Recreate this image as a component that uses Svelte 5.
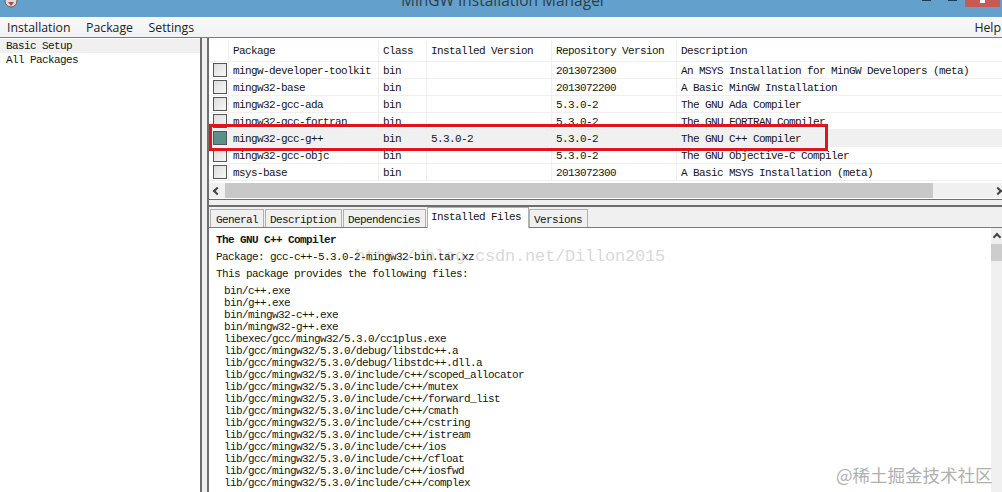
<script>
  const rows = [
    { name: 'mingw-developer-toolkit', inst: '', repo: '2013072300', desc: 'An MSYS Installation for MinGW Developers (meta)' },
    { name: 'mingw32-base', inst: '', repo: '2013072200', desc: 'A Basic MinGW Installation' },
    { name: 'mingw32-gcc-ada', inst: '', repo: '5.3.0-2', desc: 'The GNU Ada Compiler' },
    { name: 'mingw32-gcc-fortran', inst: '', repo: '5.3.0-2', desc: 'The GNU FORTRAN Compiler' },
    { name: 'mingw32-gcc-g++', inst: '5.3.0-2', repo: '5.3.0-2', desc: 'The GNU C++ Compiler', on: true },
    { name: 'mingw32-gcc-objc', inst: '', repo: '5.3.0-2', desc: 'The GNU Objective-C Compiler' },
    { name: 'msys-base', inst: '', repo: '2013072300', desc: 'A Basic MSYS Installation (meta)' }
  ];
  const tabs = ['General', 'Description', 'Dependencies', 'Installed Files', 'Versions'];
  const inc = 'lib/gcc/mingw32/5.3.0/include/c++/';
  const files = [
    'bin/c++.exe', 'bin/g++.exe', 'bin/mingw32-c++.exe', 'bin/mingw32-g++.exe',
    'libexec/gcc/mingw32/5.3.0/cc1plus.exe',
    'lib/gcc/mingw32/5.3.0/debug/libstdc++.a', 'lib/gcc/mingw32/5.3.0/debug/libstdc++.dll.a',
    inc + 'scoped_allocator', inc + 'mutex', inc + 'forward_list', inc + 'cmath', inc + 'cstring',
    inc + 'istream', inc + 'ios', inc + 'cfloat', inc + 'iosfwd', inc + 'complex'
  ];
</script>

<div class="window">
  <header class="titlebar">
    <svg class="logo" width="16" height="16" viewBox="0 0 16 16" aria-hidden="true">
      <circle cx="8" cy="6" r="6" fill="#dedad8" stroke="#6b5a58" />
      <path d="M5 7l3 4 3-4z" fill="#b8434a" />
    </svg>
    <span class="title">MinGW Installation Manager</span>
    <div class="controls">
      <span class="ctl"></span>
      <span class="ctl"></span>
      <span class="close"><i></i></span>
    </div>
  </header>

  <nav class="menubar">
    <span>Installation</span>
    <span>Package</span>
    <span>Settings</span>
    <span class="help">Help</span>
  </nav>

  <div class="body">
    <aside class="sidebar">
      <div class="cat active">Basic Setup</div>
      <div class="cat">All Packages</div>
    </aside>

    <main class="content">
      <section class="list">
        <div class="row head">
          <span class="c-check"></span>
          <span class="c-name">Package</span>
          <span class="c-class">Class</span>
          <span class="c-inst">Installed Version</span>
          <span class="c-repo">Repository Version</span>
          <span class="c-desc">Description</span>
        </div>
        {#each rows as r}
          <div class="row" class:sel={r.on}>
            <span class="c-check"><span class="box" class:on={r.on}></span></span>
            <span class="c-name">{r.name}</span>
            <span class="c-class">bin</span>
            <span class="c-inst">{r.inst}</span>
            <span class="c-repo">{r.repo}</span>
            <span class="c-desc">{r.desc}</span>
          </div>
        {/each}
        <div class="hscroll">
          <span class="arrow left"></span>
          <span class="thumb"></span>
          <span class="arrow right"></span>
        </div>
        <span class="highlight"></span>
      </section>

      <section class="details">
        <div class="tabs">
          {#each tabs as t}
            <span class="tab" class:current={t === 'Installed Files'}>{t}</span>
          {/each}
        </div>
        <div class="pane">
          <div class="text">
            <h1>The GNU C++ Compiler</h1>
            <p>Package: gcc-c++-5.3.0-2-mingw32-bin.tar.xz</p>
            <p>This package provides the following files:</p>
            <ul>
              {#each files as f}<li>{f}</li>{/each}
            </ul>
          </div>
          <div class="vscroll">
            <span class="arrow up"></span>
            <span class="vthumb"></span>
          </div>
        </div>
      </section>
    </main>
  </div>

  <span class="mark-a">http://blog.csdn.net/Dillon2015</span>
  <span class="mark-b">@稀土掘金技术社区</span>
</div>

<style>
  :global(body) {
    margin: 0;
    background: #fff;
  }

  .window {
    position: relative;
    width: 1002px;
    height: 492px;
    overflow: hidden;
    display: flex;
    flex-direction: column;
    font-family: "Liberation Mono", monospace;
    font-size: 11px;
    letter-spacing: -0.6px;
    color: #151515;
  }

  .titlebar {
    position: relative;
    flex: 0 0 17px;
    background: #63a1cc;
    overflow: hidden;
    letter-spacing: 0;
  }

  .logo {
    position: absolute;
    left: 3px;
    top: -5px;
  }

  .title {
    position: absolute;
    left: 401px;
    top: -11px;
    font: 15.5px/22px "Open Sans", sans-serif;
    color: #2b3d4a;
    white-space: nowrap;
  }

  .controls {
    position: absolute;
    right: 2px;
    top: 0;
    display: flex;
    align-items: flex-start;
  }

  .ctl {
    width: 9px;
    height: 1px;
    margin: 0 8px 0 9px;
    background: #1d3c57;
  }

  .close {
    position: relative;
    width: 35px;
    height: 7px;
    background: #c75a57;
  }

  .close i {
    position: absolute;
    left: 15px;
    top: 0;
    width: 5px;
    height: 3px;
    background: #fff;
  }

  .menubar {
    flex: 0 0 21px;
    display: flex;
    align-items: center;
    gap: 15.5px;
    padding: 0 1px 0 7px;
    background: linear-gradient(#f7f9fb, #f1f2f3);
    border-bottom: 1px solid #7c7c7c;
    font: 12.3px "Open Sans", sans-serif;
    letter-spacing: 0;
    color: #222;
    box-sizing: border-box;
  }

  .help {
    margin-left: auto;
  }

  .body {
    flex: 1;
    display: flex;
    min-height: 0;
    background: #f0f0f0;
  }

  .sidebar {
    box-sizing: border-box;
    width: 202px;
    flex: none;
    background: #fff;
    border-right: 2px solid #6e6e6e;
    padding-top: 1px;
  }

  .cat {
    height: 14px;
    line-height: 14px;
    padding-left: 6px;
  }

  .cat.active {
    background: #f0f0f0;
  }

  .content {
    flex: 1;
    margin-left: 5px;
    min-width: 0;
    display: flex;
    flex-direction: column;
    border-left: 2px solid #6e6e6e;
  }

  .list {
    position: relative;
    box-sizing: border-box;
    height: 162px;
    background: #fff;
    border-bottom: 1px solid #6e6e6e;
    padding-top: 2px;
  }

  .row {
    display: flex;
    height: 17px;
    line-height: 18px;
    box-sizing: border-box;
    border-bottom: 1px solid #efefef;
    white-space: nowrap;
  }

  .row.head {
    height: 22px;
    line-height: 22px;
  }

  .row.sel {
    background: #f0f0f0;
  }

  .row > span {
    box-sizing: border-box;
    border-right: 1px solid #efefef;
    padding-left: 4px;
    overflow: hidden;
  }

  .c-check {
    width: 20px;
    display: flex;
    align-items: center;
    padding-left: 4px !important;
  }

  .c-name { width: 150px; }
  .c-class { width: 48px; }
  .c-inst { width: 125px; }
  .c-repo { width: 125px; }
  .c-desc { flex: 1; border-right: 0 !important; }

  .box {
    box-sizing: border-box;
    width: 14px;
    height: 14px;
    border: 1px solid #555;
    background: linear-gradient(135deg, #dcdcdc, #f8f8f8);
  }

  .box.on {
    background: #5b9089;
  }

  .hscroll {
    display: flex;
    align-items: center;
    height: 15px;
    margin-top: 2px;
    background: #f0f0f0;
  }

  .thumb {
    flex: 0 0 708px;
    height: 15px;
    margin-left: 5px;
    background: #c8c8c8;
  }

  .arrow {
    flex: none;
    width: 6px;
    height: 6px;
    box-sizing: border-box;
    border: solid #444;
    border-width: 2px 0 0 2px;
  }

  .arrow.left {
    margin-left: 5px;
    transform: rotate(-45deg);
  }

  .arrow.right {
    margin-left: auto;
    margin-right: 1px;
    transform: rotate(135deg);
  }

  .arrow.up {
    margin: 6px auto 0;
    transform: rotate(45deg);
  }

  .highlight {
    position: absolute;
    left: 0;
    top: 86px;
    width: 619px;
    height: 27px;
    box-sizing: border-box;
    border: 3px solid #e0141c;
  }

  .details {
    flex: 1;
    min-height: 0;
    display: flex;
    flex-direction: column;
    margin-top: 5px;
    border-top: 2px solid #6e6e6e;
  }

  .tabs {
    flex: 0 0 21px;
    display: flex;
    align-items: flex-end;
    padding-left: 1px;
    border-bottom: 1px solid #7a7a7a;
    box-sizing: border-box;
  }

  .tab {
    box-sizing: border-box;
    height: 18px;
    line-height: 20px;
    padding: 0 5px 0 4px;
    margin-right: 1px;
    background: #f0f0f0;
    border: 1px solid #b0b0b0;
    border-bottom: 0;
  }

  .tab:first-child {
    padding-left: 5px;
  }

  .tab.current {
    height: 21px;
    line-height: 19px;
    padding: 0 7px 0 3px;
    margin-bottom: -1px;
    margin-right: 0;
    background: #fff;
  }

  .pane {
    flex: 1;
    min-height: 0;
    display: flex;
    background: #fff;
  }

  .text {
    flex: 1;
    padding: 5px 0 0 7px;
    white-space: nowrap;
  }

  h1 {
    margin: 0;
    font-size: 11px;
    font-weight: 700;
    line-height: 14px;
  }

  p {
    margin: 3px 0 0;
    line-height: 14px;
  }

  ul {
    list-style: none;
    margin: 4px 0 0;
    padding: 0 0 0 8px;
    line-height: 12px;
  }

  .vscroll {
    flex: 0 0 11px;
    background: #f0f0f0;
    display: flex;
    flex-direction: column;
  }

  .vthumb {
    height: 17px;
    margin-top: 4px;
    background: #cdcdcd;
  }

  .mark-a {
    position: absolute;
    left: 355px;
    top: 247px;
    font: 17px "Liberation Mono", monospace;
    letter-spacing: -0.2px;
    color: rgba(120, 120, 120, 0.3);
    white-space: nowrap;
  }

  .mark-b {
    position: absolute;
    left: 836px;
    top: 462px;
    font: 17.5px "Noto Sans CJK SC", sans-serif;
    letter-spacing: 0;
    color: #b0b0b0;
    white-space: nowrap;
  }
</style>
